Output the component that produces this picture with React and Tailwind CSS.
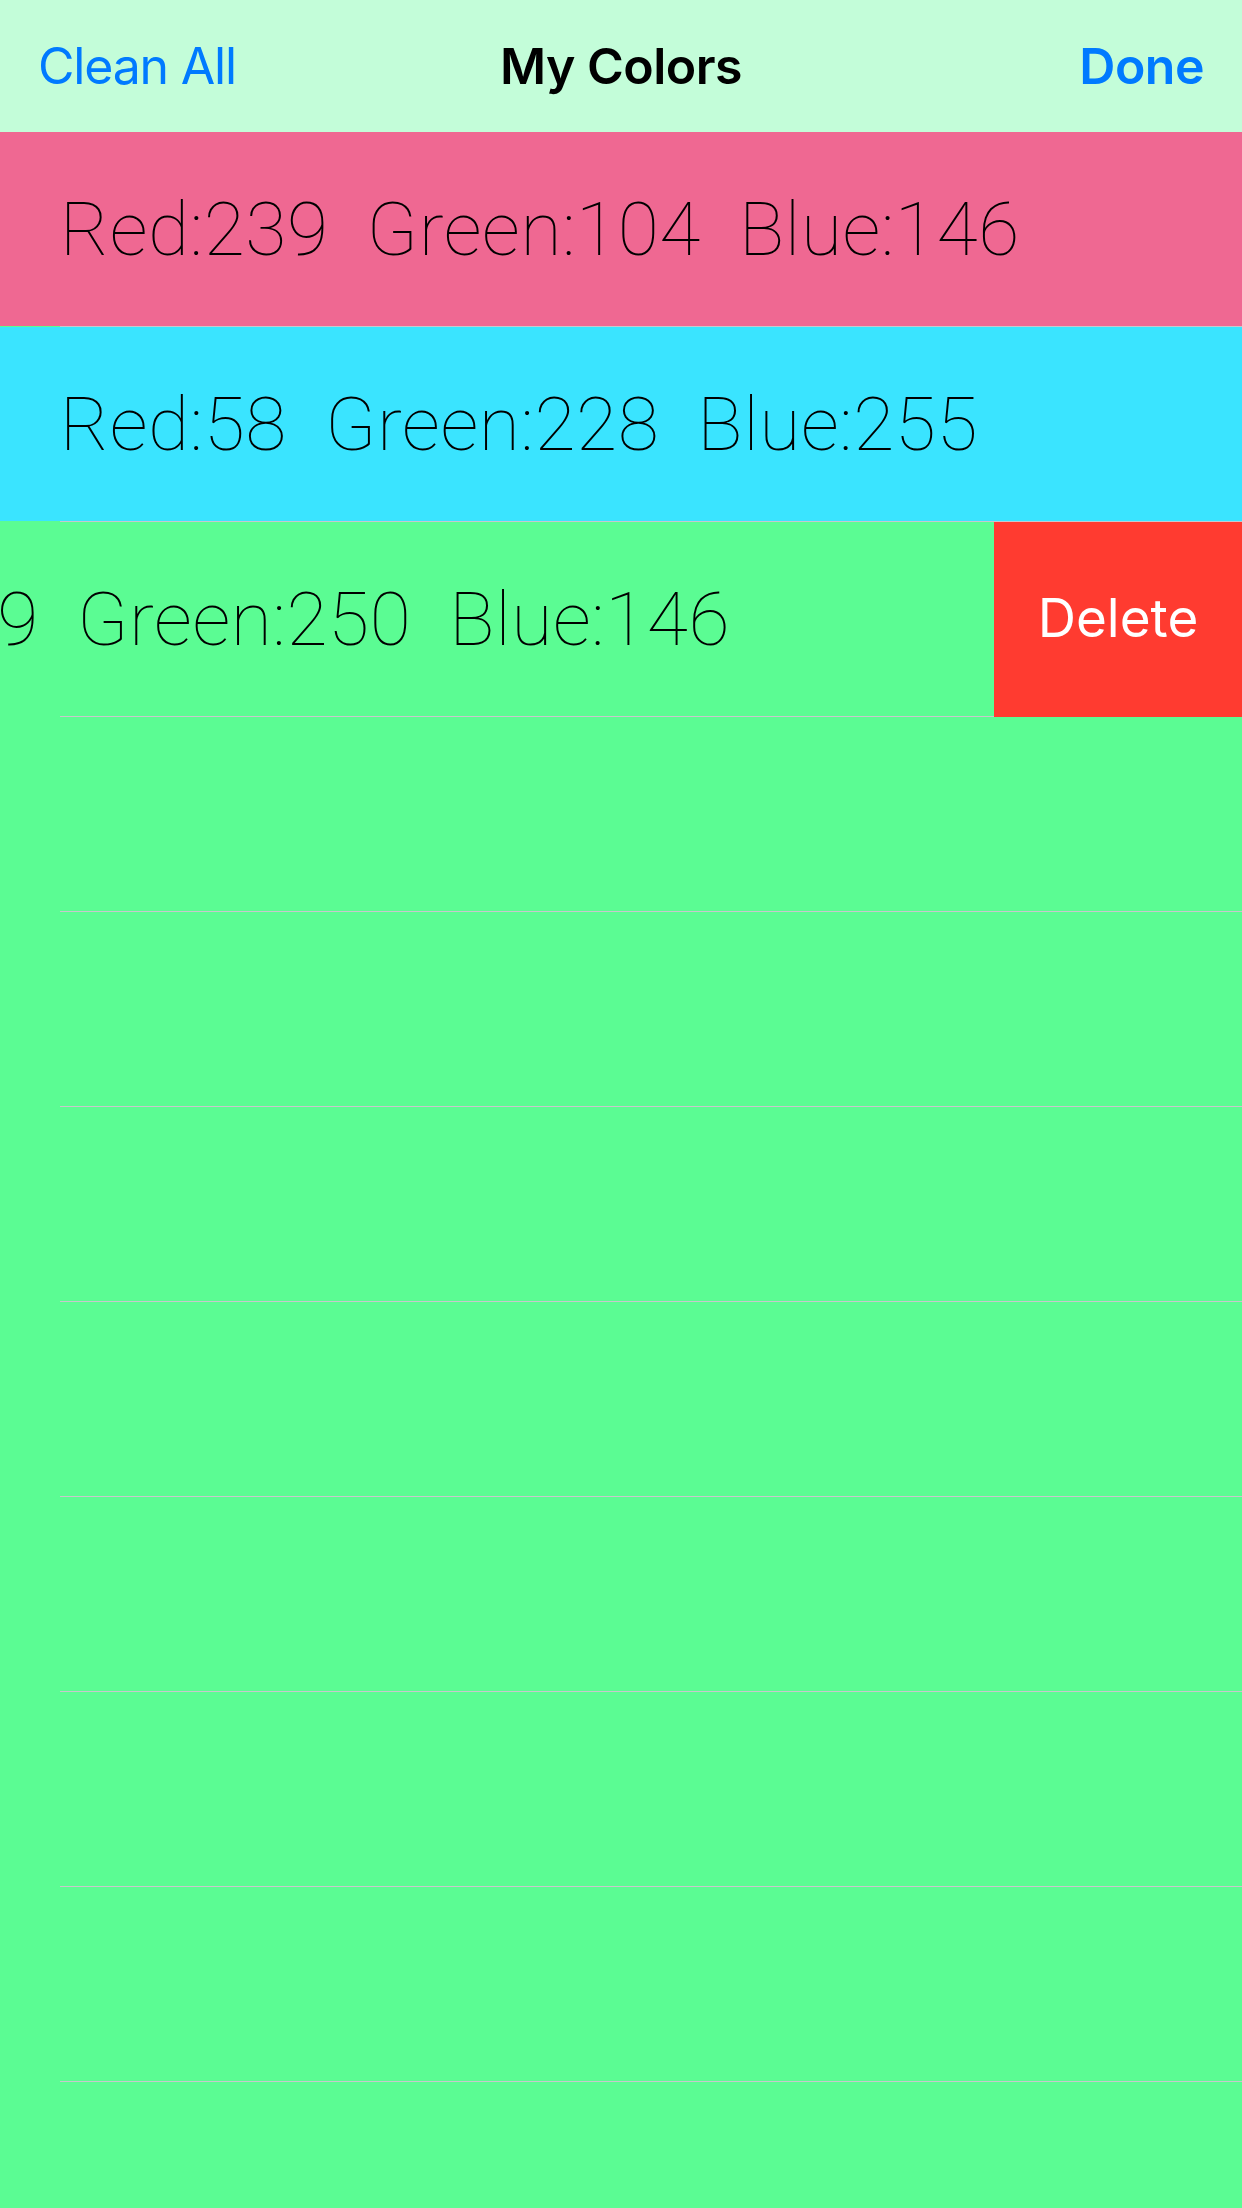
import React from 'react';

const rows = [
    { id: 1, r: 239, g: 104, b: 146, bg: 'bg-[#ef6892]' },
    { id: 2, r: 58, g: 228, b: 255, bg: 'bg-[#3ae4ff]' },
];

const Separator = () => (
    <div className="flex h-[1px]">
        <div className="w-[60px] bg-[#5bfc93]" />
        <div className="flex-1 bg-[#c8c7cc]" />
    </div>
);

const ColorText = ({ r, g, b }) => (
    <div
        className="flex gap-[38px] whitespace-nowrap text-[75px] font-thin text-black leading-none tracking-[0.6px]"
        style={{ fontFamily: 'Roboto, "Liberation Sans", sans-serif' }}
    >
        <span>{`Red:${r}`}</span>
        <span>{`Green:${g}`}</span>
        <span>{`Blue:${b}`}</span>
    </div>
);

const App = () => {
    return (
        <div className="w-[1242px] h-[2208px] overflow-hidden bg-[#5bfc93]">
            {/* nav bar */}
            <div
                className="h-[132px] bg-[#c3fdd9] flex items-center justify-between px-[38px] relative"
                style={{ fontFamily: 'Inter, "Liberation Sans", sans-serif' }}
            >
                <span className="text-[50px] text-[#007aff] tracking-[-1.2px]">Clean All</span>
                <span className="absolute left-0 right-0 text-center text-[50px] font-semibold text-black tracking-[-0.5px] pointer-events-none">
                    My Colors
                </span>
                <span className="text-[50px] font-semibold text-[#007aff] tracking-[-0.5px]">Done</span>
            </div>

            {rows.map((row) => (
                <div key={row.id}>
                    <div className={`h-[194px] ${row.bg} flex items-center pl-[60px]`}>
                        <ColorText r={row.r} g={row.g} b={row.b} />
                    </div>
                    <Separator />
                </div>
            ))}

            {/* swiped row with delete action */}
            <div className="h-[194px] flex overflow-hidden">
                <div className="w-[1242px] shrink-0 ml-[-248px] bg-[#5bfc93] flex items-center pl-[60px]">
                    <ColorText r={89} g={250} b={146} />
                </div>
                <div
                    className="w-[248px] shrink-0 bg-[#ff3b30] flex items-center justify-center text-white text-[53px]"
                    style={{ fontFamily: 'Inter, "Liberation Sans", sans-serif' }}
                >
                    Delete
                </div>
            </div>
            <div className="flex h-[1px]">
                <div className="w-[60px]" />
                <div className="w-[934px] bg-[#c8c7cc]" />
                <div className="flex-1 bg-[#ff3b30]" />
            </div>

            {/* empty rows */}
            {[0, 1, 2, 3, 4, 5, 6].map((i) => (
                <div key={i}>
                    <div className="h-[194px]" />
                    <div className="h-[1px] ml-[60px] bg-[#c8c7cc]" />
                </div>
            ))}
        </div>
    );
};

export default App;
